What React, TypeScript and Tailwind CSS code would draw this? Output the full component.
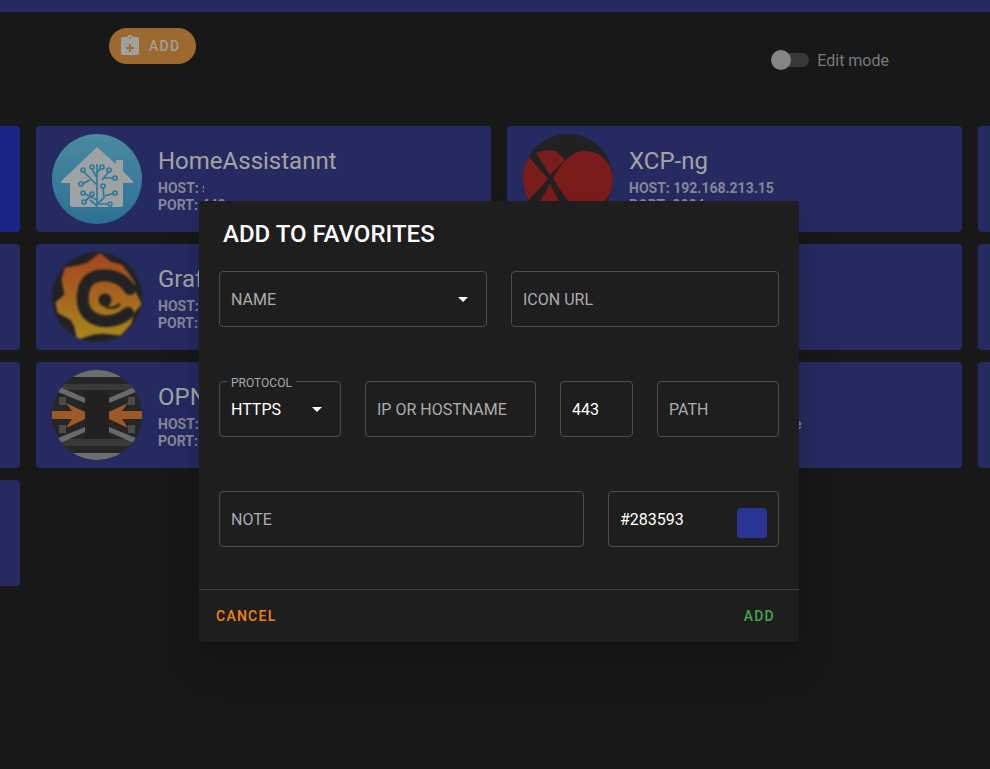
import React from "react";

const Arrow = () => (
  <svg viewBox="0 0 24 24" className="w-6 h-6 shrink-0" fill="#ffffff"><path d="M7 10l5 5 5-5z" /></svg>
);

const HomeIcon = () => (
  <svg viewBox="0 0 90 90" className="w-[90px] h-[90px] shrink-0 blur-[0.4px]">
    <defs>
      <linearGradient id="ha" x1="0" y1="0" x2="0" y2="1"><stop offset="0" stopColor="#4a8aa2" /><stop offset="1" stopColor="#2b7094" /></linearGradient>
    </defs>
    <circle cx="45" cy="45" r="45" fill="url(#ha)" />
    <path d="M45 13L64 30V26H71V37L81 47.5Q81.500 49 80 49H71V71Q71 73 69 73H20Q18 73 18 71V49H10Q8.500 49 9 47.500Z" fill="#9fa2a3" />
    <g stroke="#2f7a9b" strokeWidth="1.700" fill="none">
      <path d="M45 74V30M45 38L50 33.500M45 44L40 35M45 51L33 39 31.500 37M38 46L30 50M45 66L33 60M40 61L32 68M45 70L52 64 51 53M45 70H57M53 62L62 59M50 46L57 37.500M52 44L62 44M45 72L38 66" />
      <g fill="#9fa2a3">
        <circle cx="31" cy="36" r="2" /><circle cx="40" cy="33" r="2" /><circle cx="50" cy="33" r="2" /><circle cx="57" cy="36" r="2" />
        <circle cx="63" cy="44" r="2" /><circle cx="29" cy="50" r="2" /><circle cx="51" cy="52" r="2" /><circle cx="63" cy="59" r="2" />
        <circle cx="31" cy="59" r="2" /><circle cx="40" cy="60" r="2" /><circle cx="32" cy="68" r="2" /><circle cx="58" cy="70" r="2" />
      </g>
    </g>
  </svg>
);

const XcpIcon = () => (
  <svg viewBox="0 0 90 90" className="w-[90px] h-[90px] shrink-0 blur-[0.5px]">
    <defs><clipPath id="xc"><circle cx="45" cy="45" r="45" /></clipPath></defs>
    <circle cx="45" cy="45" r="45" fill="#212121" />
    <g clipPath="url(#xc)">
      <path d="M30 44C38 30 48 17 62 17C78 17 90 30 90 46C90 62 78 75 62 75C48 75 38 58 30 44Z" fill="#7a1c1b" />
      <path d="M0 33L6 23 25 45 6 66 0 60ZM13 19Q22 15 33 17L42 26 27 41ZM17 67L27 50 36 67 30 90H10Z" fill="#7a1c1b" />
    </g>
  </svg>
);

const GrafanaIcon = () => (
  <svg viewBox="0 0 90 90" className="w-[90px] h-[90px] shrink-0 blur-[0.8px]">
    <defs>
      <linearGradient id="gf" gradientUnits="userSpaceOnUse" x1="0" y1="0" x2="0" y2="90"><stop offset="0" stopColor="#a5431f" /><stop offset="1" stopColor="#a88a1e" /></linearGradient>
      <clipPath id="gc"><circle cx="45" cy="45" r="45" /></clipPath>
    </defs>
    <circle cx="45" cy="45" r="45" fill="#222222" />
    <g clipPath="url(#gc)">
      <path d="M14 17L26 15 36 12 48 3 58 11 69 14 76 23 81 31 83 42 88 52 81 60 78 71 68 82 51 80 41 81 26 86 24 75 20 67 7 60 5 51 14 43 11 28Z" fill="url(#gf)" stroke="url(#gf)" strokeWidth="3" strokeLinejoin="round" />
      <path d="M78 37C70 24 52 20 40 26C28 33 28 55 37 63C48 73 66 70 76 61" stroke="#222222" strokeWidth="12" fill="none" strokeLinecap="round" />
      <circle cx="53" cy="48" r="6.500" fill="#222222" />
      <path d="M53 54C58 57 64 56 68 52" stroke="#222222" strokeWidth="2.500" fill="none" />
    </g>
  </svg>
);

const Bars = () => (
  <>
    <path d="M8 17L33 28V33L6 22Z" fill="#6a6a6a" />
    <path d="M7 27H14V35H7Z" fill="#4a4a4a" />
  </>
);

const OpnIcon = () => (
  <svg viewBox="0 0 90 90" className="w-[90px] h-[90px] shrink-0 blur-[0.4px]">
    <defs><clipPath id="oc"><circle cx="45" cy="45" r="45" /></clipPath></defs>
    <circle cx="45" cy="45" r="45" fill="#262626" />
    <g clipPath="url(#oc)">
      <rect x="0" y="0" width="90" height="7" fill="#6e6e6e" />
      <rect x="0" y="83" width="90" height="7" fill="#6e6e6e" />
      <rect x="0" y="14" width="90" height="6" fill="#3a3a3a" />
      <rect x="0" y="69" width="90" height="7" fill="#3a3a3a" />
      <rect x="33" y="20" width="24" height="49" fill="#212121" />
      <Bars />
      <g transform="matrix(-1 0 0 1 90 0)"><Bars /></g>
      <g transform="matrix(1 0 0 -1 0 90)"><Bars /></g>
      <g transform="matrix(-1 0 0 -1 90 90)"><Bars /></g>
      <path d="M0 41H20L14 33 33 42V49L14 58 20 49H0Z" fill="#9e5a26" />
      <path d="M90 41H70L76 33 57 42V49L76 58 70 49H90Z" fill="#9e5a26" />
    </g>
  </svg>
);

function Card({ icon, title, host, port, bright }: { icon?: React.ReactNode; title?: string; host?: React.ReactNode; port?: string; bright?: boolean }) {
  return (
    <div className={`h-[106px] rounded flex items-start gap-4 pl-4 pt-2 ${bright ? "bg-[#1a2585]" : "bg-[#252b61]"}`}>
      {icon ?? <div className="w-[90px] h-[90px] shrink-0" />}
      {title !== undefined && (
        <div className="pt-[10px]">
          <div className="h-[34px] text-2xl leading-[34px] text-[#a3a3a3]">{title}</div>
          <div className="mt-[2px] text-sm leading-[17px] font-bold text-[#85869b]">
            <div>HOST: {host}</div>
            <div>PORT: {port}</div>
          </div>
        </div>
      )}
    </div>
  );
}

function Field({ label, value, className, arrow, legend, swatch }: { label?: string; value?: string; className: string; arrow?: boolean; legend?: string; swatch?: boolean }) {
  return (
    <div className={`relative h-14 rounded border border-[#4d4d4d] flex items-center pl-[11px] pr-[11px] text-base ${className}`}>
      {legend && <span className="absolute left-[7px] top-[-6px] bg-[#1e1e1e] px-[4px] text-xs leading-[14px] text-[#a8a8a8]">{legend}</span>}
      <span className={`flex-1 whitespace-nowrap pt-0.5 ${value ? "text-[#ffffff]" : "text-[#acacac]"}`}>{value ?? label}</span>
      {arrow && <Arrow />}
      {swatch && <span className="w-[30px] h-[30px] mt-2 rounded bg-[#283593]" />}
    </div>
  );
}

export default function App() {
  return (
    <div className="relative h-[769px] w-[990px] overflow-hidden bg-[#181818] font-['Roboto',sans-serif]">
      <div className="h-3 bg-[#252b61]" />
      <div className="h-[114px] flex items-start">
        <div className="ml-[109px] mt-4 w-[87px] h-9 rounded-full bg-[#9c6a2f] flex items-center pl-[9px] gap-[7px]">
          <svg viewBox="0 0 24 24" className="w-6 h-6" fill="#a0a0a0" fillRule="evenodd">
            <path d="M19 3h-4.180C14.400 1.840 13.300 1 12 1s-2.400.840-2.820 2H5c-1.100 0-2 .900-2 2v14c0 1.100.900 2 2 2h14c1.100 0 2-.900 2-2V5c0-1.100-.900-2-2-2zm-7 0c.550 0 1 .450 1 1s-.450 1-1 1-1-.450-1-1 .450-1 1-1zm1 7h-2v3H8v2h3v3h2v-3h3v-2h-3z" />
          </svg>
          <span className="text-sm font-medium tracking-[1.25px] text-[#a0a0a0]">ADD</span>
        </div>
        <div className="ml-auto mr-[101px] mt-[38px] flex items-start gap-2">
          <div className="relative w-[38px] h-5 flex items-center">
            <div className="ml-[4px] w-[34px] h-[14px] rounded-full bg-[#383838]" />
            <div className="absolute left-0 top-0 w-5 h-5 rounded-full bg-[#858585]" />
          </div>
          <span className="h-5 text-base leading-[22px] text-[#7a7a7a]">Edit mode</span>
        </div>
      </div>
      <div className="ml-[-435px] grid grid-cols-[repeat(4,455px)] gap-x-4 gap-y-3">
        <Card bright />
        <Card icon={<HomeIcon />} title="HomeAssistannt" host={<span className="inline-block w-[2px] overflow-hidden align-bottom">s</span>} port="443" />
        <Card icon={<XcpIcon />} title="XCP-ng" host="192.168.213.15" port="8084" />
        <Card />
        <Card />
        <Card icon={<GrafanaIcon />} title="Grafana" host="" port="" />
        <Card />
        <Card />
        <Card />
        <Card icon={<OpnIcon />} title="OPNsense" host="" port="" />
        <Card title="" host="nextcloud.home.ane" port="" />
        <Card />
        <Card />
      </div>

      <div className="absolute left-[199px] top-[201px] w-[600px] h-[441px] rounded bg-[#1e1e1e] shadow-[0_11px_15px_-7px_rgba(0,0,0,0.2),0_24px_38px_3px_rgba(0,0,0,0.14)] flex flex-col">
        <div className="pl-6 pt-[17px] h-[70px] text-2xl leading-8 font-medium text-white">ADD TO FAVORITES</div>
        <div className="px-5 flex flex-col gap-[54px] h-[319px] border-b border-[#3f3f3f]">
          <div className="flex gap-6">
            <Field label="NAME" arrow className="w-[268px]" />
            <Field label="ICON URL" className="w-[268px]" />
          </div>
          <div className="flex gap-6">
            <Field value="HTTPS" legend="PROTOCOL" arrow className="w-[122px]" />
            <Field label="IP OR HOSTNAME" className="w-[171px]" />
            <Field value="443" className="w-[73px]" />
            <Field label="PATH" className="w-[122px]" />
          </div>
          <div className="flex gap-6">
            <Field label="NOTE" className="w-[365px]" />
            <Field value="#283593" swatch className="w-[171px]" />
          </div>
        </div>
        <div className="flex-1 flex items-center justify-between pl-[17px] pr-6 text-sm font-medium tracking-[1.25px]">
          <span className="text-[#f2850a]">CANCEL</span>
          <span className="text-[#43a84a]">ADD</span>
        </div>
      </div>
    </div>
  );
}
